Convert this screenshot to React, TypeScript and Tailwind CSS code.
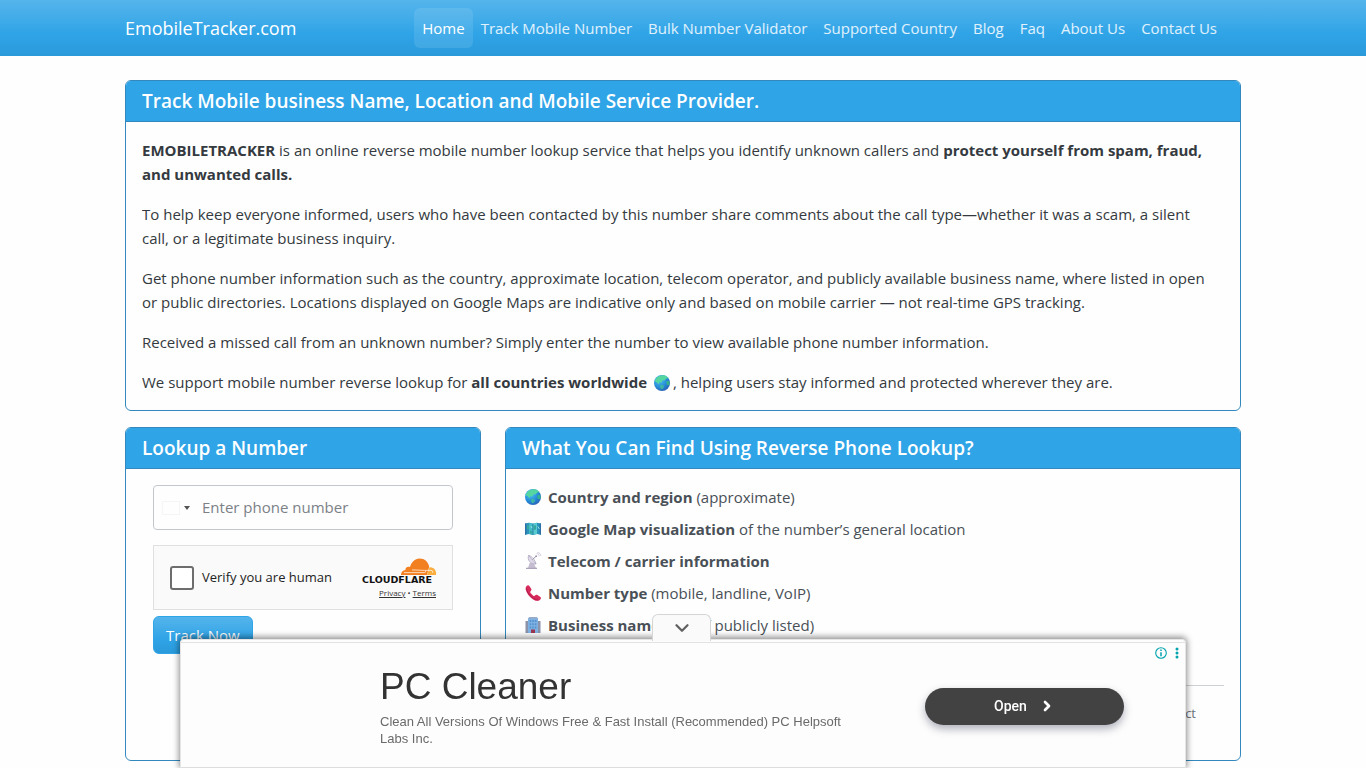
import { ChevronDown, ChevronRight } from 'lucide-react';

const NAV_LINKS = [
  'Home',
  'Track Mobile Number',
  'Bulk Number Validator',
  'Supported Country',
  'Blog',
  'Faq',
  'About Us',
  'Contact Us',
];

function GlobeIcon() {
  return (
    <svg viewBox="0 0 18 18" className="inline-block size-[18px] shrink-0 align-[-4px]" aria-hidden="true">
      <defs>
        <radialGradient id="ocean" cx="0.35" cy="0.3" r="0.8">
          <stop offset="0" stopColor="#4fc3f2" />
          <stop offset="0.6" stopColor="#2489d6" />
          <stop offset="1" stopColor="#2b5bb0" />
        </radialGradient>
      </defs>
      <circle cx="9" cy="9" r="8" fill="url(#ocean)" />
      <path d="M3.4 4C5.800 1.400 9.400.8 11.800 1.600c1.600.5 2.800 1.400 3.600 2.600l-2.200.2-1.400 1.800-2.400.4-.8 1.800-2.200-.4-.6 2.200-2.800-2.400-1.600-.6z" fill="#55d6a0" />
      <path d="M13.400 7.400l2.600-.6c.6 1 .8 2.200.6 3.600l-1.600 1-1.600-1.400z" fill="#36b08c" />
      <path d="M7.600 10.600l3 .8.6 1.400-2 2.400-1.600-.4-.6-2.200z" fill="#3fb3a4" />
    </svg>
  );
}

function MapIcon() {
  return (
    <svg viewBox="0 0 18 18" className="size-[18px] shrink-0" aria-hidden="true">
      <path d="M1 3.500l4-.7 4 .9 4-.9 4 .7v11.300l-4-.7-4 .9-4-.9-4 .7z" fill="#2c94bc" />
      <path d="M5 2.800l4 .9V15l-4-.9z" fill="#43bcc8" />
      <path d="M9 3.700l4-.9v11.300L9 15z" fill="#59cbd2" />
      <path d="M1 3.500l1.400-.2v11.300L1 14.800zM15.600 3.300l1.400.2v11.300l-1.400-.3z" fill="#2a6fa6" />
      <path d="M3 5l2 .4v3.400L3 9.600zM10 5.600l2-.4v4l-2 1zM6 10.400l2 .8v2.400l-2-.4z" fill="#37a79c" />
      <path d="M9 3.700V15" stroke="#1f6f92" strokeWidth="0.8" />
      <path d="M13.800 6.400l1.600 2.600M7 6l.8 2" stroke="#a4e8ea" strokeWidth="0.9" />
    </svg>
  );
}

function SatelliteIcon() {
  return (
    <svg viewBox="0 0 18 18" className="size-[18px] shrink-0" aria-hidden="true">
      <path d="M4 16l1.600-5h4L12 16z" fill="#c4bed0" />
      <path d="M2 16.400h11" stroke="#aba4ba" strokeWidth="1.2" />
      <path d="M4.600 3.400c-1.600 4.400 1.600 9 7.400 8.600z" fill="#dfdae8" stroke="#b3aac4" strokeWidth="0.8" />
      <path d="M4.600 3.400c2.800.4 6.400 4.400 7.400 8.600" fill="none" stroke="#a199b2" strokeWidth="0.8" />
      <path d="M8.400 7.600L12 4.400" stroke="#9a92ab" strokeWidth="1" />
      <circle cx="12.200" cy="4.200" r="0.9" fill="#9a92ab" />
      <path d="M12.600 1.600c1.600 0 2.600 1 2.600 2.600M13.400.6c2 0 3.400 1.400 3.400 3.200" fill="none" stroke="#c6bfd6" strokeWidth="0.8" />
    </svg>
  );
}

function PhoneIcon() {
  return (
    <svg viewBox="0 0 18 18" className="size-[18px] shrink-0" aria-hidden="true">
      <path
        d="M2.2 2.4C3.2 1.2 4.5.8 5.2 1.8l2 3c.6 1 .2 1.7-.6 2.4-.7.6-.6 1 .2 2l2.200 2.200c1 .8 1.400 .9 2 .2.700-.8 1.400-1.200 2.400-.6l3 2c1 .7.600 2-.600 3-2.200 1.800-6 .600-9.400-2.800S.4 4.600 2.200 2.400z"
        fill="#d92a5c"
      />
      <path d="M2.600 4.200c.2 3 1.800 5.600 4 7.800s4.800 3.800 7.400 4" fill="none" stroke="#a81f4c" strokeWidth="0.9" />
    </svg>
  );
}

function BuildingIcon() {
  return (
    <svg viewBox="0 0 18 18" className="size-[18px] shrink-0" aria-hidden="true">
      <path d="M1.500 5H5v12H1.500zM13 5h3.500v12H13z" fill="#8b93ab" />
      <path d="M4 2.500L5.500 1h7L14 2.500V17H4z" fill="#7fb2e2" />
      <path d="M4 2.500L5.500 1h7L14 2.500z" fill="#9aa9c4" />
      <path
        d="M5.600 4h1.600v2H5.600zM8.200 4h1.600v2H8.200zM10.800 4h1.600v2h-1.600zM5.600 7.200h1.600v2H5.600zM8.200 7.200h1.600v2H8.200zM10.800 7.200h1.600v2h-1.600zM5.600 10.400h1.600v2H5.600zM8.200 10.400h1.600v2H8.200zM10.800 10.400h1.600v2h-1.600z"
        fill="#5592cf"
      />
      <path d="M7 13.600h4V17H7z" fill="#9b3552" />
    </svg>
  );
}

function CloudflareLogo() {
  return (
    <svg viewBox="0 0 74 28" className="h-[28px] w-[74px] overflow-visible" role="img" aria-label="Cloudflare">
      <path
        d="M39 18c0-2.700 1.800-4.800 4.400-5-.3-2.400 2.400-4.200 4.600-2.900C49.600 5 52.700 1.500 57.500 1.500c5.200 0 8.800 3.500 9.700 8.200L65 18z"
        fill="#f38020"
      />
      <path d="M65 18l2.500-7.800c4.200-.6 7.200 3.200 6.500 7.800z" fill="#faae40" />
      <path d="M42 15.600h20.500c1.500 0 1.500-2 0-2.200l-12.500-.5M63 13.400h6c1.600 0 2.200 1.300 1.500 2.400" fill="none" stroke="#fff" strokeWidth="0.7" />
      <text x="0" y="26" fill="#111" fontFamily="'DejaVu Sans', sans-serif" fontWeight="700" fontSize="9.5">
        CLOUDFLARE
      </text>
    </svg>
  );
}

const FEATURES = [
  { icon: <GlobeIcon />, title: 'Country and region', note: '(approximate)' },
  { icon: <MapIcon />, title: 'Google Map visualization', note: 'of the number’s general location' },
  { icon: <SatelliteIcon />, title: 'Telecom / carrier information', note: '' },
  { icon: <PhoneIcon />, title: 'Number type', note: '(mobile, landline, VoIP)' },
  { icon: <BuildingIcon />, title: 'Business name', note: '(only if publicly listed)' },
];

function CardHeader({ children }: { children: React.ReactNode }) {
  return (
    <h2 className="border-b border-[#3389bd] bg-[#2fa4e7] px-4 py-2 text-[19px] leading-6 font-semibold text-white">
      {children}
    </h2>
  );
}

function Navbar() {
  return (
    <header className="bg-linear-to-b from-[#54b4eb] via-[#2fa4e7] via-60% to-[#2a9adb]">
      <div className="mx-auto flex h-14 max-w-[1140px] items-center justify-between px-3">
        <a href="#" className="text-lg leading-7 text-white">
          EmobileTracker.com
        </a>
        <nav className="mr-4 flex">
          {NAV_LINKS.map((link) => (
            <a
              key={link}
              href="#"
              className={
                link === 'Home'
                  ? 'rounded-md bg-white/10 px-2 py-2 leading-6 text-white'
                  : 'px-2 py-2 leading-6 text-white/85'
              }
            >
              {link}
            </a>
          ))}
        </nav>
      </div>
    </header>
  );
}

function LookupForm() {
  return (
    <section className="overflow-hidden rounded-md border border-[#3389bd]">
      <CardHeader>Lookup a Number</CardHeader>
      <form className="mx-auto w-[300px] pt-4" onSubmit={(e) => e.preventDefault()}>
        <div className="flex h-[45px] items-center rounded border border-[#c3c7cc] pl-2">
          <button type="button" aria-label="Select country" className="flex items-center gap-1">
            <span className="h-3.5 w-[18px] border border-[#f5f5f5]" />
            <span className="border-x-3 border-t-4 border-x-transparent border-t-[#555]" />
          </button>
          <input
            type="tel"
            aria-label="Phone number"
            placeholder="Enter phone number"
            className="ml-3 min-w-0 flex-1 outline-none placeholder:text-[#7b8187]"
          />
        </div>
        <div className="mt-[15px] flex h-[65px] items-center justify-between border border-[#e0e0e0] bg-[#fafafa] px-4">
          <label className="flex items-center gap-2 text-[13px] text-[#232323]">
            <input type="checkbox" className="size-6 appearance-none rounded-[3px] border-2 border-[#6d6d6d] bg-white" />
            Verify you are human
          </label>
          <div className="flex flex-col items-end">
            <CloudflareLogo />
            <p className="mt-0.5 text-[8px] leading-3 text-[#333]">
              <a href="#" className="underline">
                Privacy
              </a>
              {' • '}
              <a href="#" className="underline">
                Terms
              </a>
            </p>
          </div>
        </div>
        <button
          type="submit"
          className="mt-1.5 h-[38px] rounded-md border border-[#2fa4e7] bg-linear-to-b from-[#54b4eb] via-[#2fa4e7] via-60% to-[#2a9adb] px-3 text-white"
        >
          Track Now
        </button>
      </form>
    </section>
  );
}

function FeatureCard() {
  return (
    <section className="col-span-2 overflow-hidden rounded-md border border-[#3389bd] text-[#495057]">
      <CardHeader>What You Can Find Using Reverse Phone Lookup?</CardHeader>
      <div className="p-4">
        <ul className="flex flex-col gap-2">
          {FEATURES.map(({ icon, title, note }) => (
            <li key={title} className="flex items-center gap-1.5 pl-0.5 leading-6">
              {icon}
              <span>
                <strong className="font-bold">{title}</strong> {note}
              </span>
            </li>
          ))}
        </ul>
        <hr className="mt-12 border-[#ced1d4]" />
        <p className="mt-4 mb-5 pr-7 text-right text-[13px] leading-[22px] text-[#6c757d]">ct</p>
      </div>
    </section>
  );
}

function AdBanner() {
  return (
    <aside className="fixed inset-x-0 bottom-0 mx-auto h-[129px] max-w-[1006px] rounded-t border border-b-[#ddd] border-[#e5e5e5] bg-[#fdfdfd] shadow-[0_-1px_6px_1px_rgba(0,0,0,0.45)]">
      <button
        type="button"
        aria-label="Collapse"
        className="absolute -top-[26px] left-[471px] flex h-[27px] w-[59px] items-center justify-center rounded-t-md border border-b-0 border-[#d5d5d5] bg-[#fafafa]"
      >
        <ChevronDown size={22} strokeWidth={2.5} className="text-[#616161]" />
      </button>
      <div className="mt-0.5 border-t border-[#e2e2e2]" />
      <div className="absolute top-1.5 right-[5px] flex items-center gap-1.5 text-[#00a3ae]">
        <svg viewBox="0 0 14 14" className="size-3.5" aria-hidden="true">
          <circle cx="7" cy="7" r="5.300" fill="none" stroke="currentColor" strokeWidth="1.100" />
          <path d="M7 6.200v4M7 3.600v1.300" stroke="currentColor" strokeWidth="1.500" />
        </svg>
        <svg viewBox="0 0 6 14" className="h-3.5 w-1.5" fill="currentColor" aria-hidden="true">
          <circle cx="3" cy="3" r="1.500" />
          <circle cx="3" cy="7" r="1.500" />
          <circle cx="3" cy="11" r="1.500" />
        </svg>
      </div>
      <div className="flex items-center justify-between pt-[22px] pr-[61px] pl-[199px] font-['Liberation_Sans',sans-serif]">
        <div className="w-[490px]">
          <h3 className="text-[37px] leading-[44px] text-[#333]">PC Cleaner</h3>
          <p className="mt-1 text-[13px] leading-[17px] text-[#6a6a6a]">
            Clean All Versions Of Windows Free &amp; Fast Install (Recommended) PC Helpsoft Labs Inc.
          </p>
        </div>
        <button
          type="button"
          className="flex h-[37px] w-[199px] items-center justify-center gap-3 rounded-full bg-[#424242] font-['Roboto',sans-serif] text-sm font-medium text-white shadow-[0_4px_9px_rgba(60,64,90,0.4)]"
        >
          Open
          <ChevronRight size={16} strokeWidth={4} />
        </button>
      </div>
    </aside>
  );
}

export default function App() {
  return (
    <div className="min-h-screen bg-[#fefefe] pb-2 font-['Open_Sans','Noto_Sans',sans-serif] text-[15px] text-[#343a40]">
      <Navbar />
      <main className="mx-auto max-w-[1140px] px-3 pt-6">
        <section className="overflow-hidden rounded-md border border-[#3389bd]">
          <CardHeader>Track Mobile business Name, Location and Mobile Service Provider.</CardHeader>
          <div className="flex flex-col gap-4 py-4 pr-7 pl-4 leading-6">
            <p>
              <strong>EMOBILETRACKER</strong> is an online reverse mobile number lookup service that helps you identify
              unknown callers and <strong>protect yourself from spam, fraud, and unwanted calls.</strong>
            </p>
            <p>
              To help keep everyone informed, users who have been contacted by this number share comments about the call
              type—whether it was a scam, a silent call, or a legitimate business inquiry.
            </p>
            <p>
              Get phone number information such as the country, approximate location, telecom operator, and publicly
              available business name, where listed in open or public directories. Locations displayed on Google Maps
              are indicative only and based on mobile carrier — not real-time GPS tracking.
            </p>
            <p>
              Received a missed call from an unknown number? Simply enter the number to view available phone number
              information.
            </p>
            <p>
              We support mobile number reverse lookup for <strong>all countries worldwide</strong>{' '}
              <span className="mx-0.5">
                <GlobeIcon />
              </span>
              , helping users stay informed and protected wherever they are.
            </p>
          </div>
        </section>
        <div className="mt-4 grid grid-cols-3 gap-6">
          <LookupForm />
          <FeatureCard />
        </div>
      </main>
      <AdBanner />
    </div>
  );
}
